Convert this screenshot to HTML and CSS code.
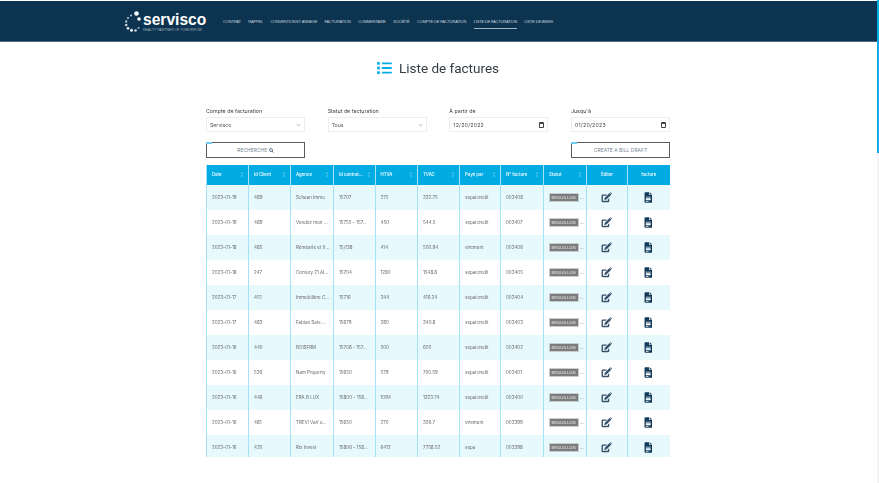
FILE: index.html
```html
<!DOCTYPE html>
<html lang="fr">
<head>
    <meta charset="UTF-8">
    <meta name="viewport" content="width=device-width, initial-scale=1.0">
    <title>Liste de factures</title>
    <link rel="stylesheet" href="styles.css">
</head>
<body>
    <svg class="sprites" width="0" height="0">
        <symbol id="icon-edit" viewBox="0 0 20 20">
            <path d="M15 11.500v4.700a2.300 2.300 0 0 1-2.300 2.300H3.300A2.300 2.300 0 0 1 1 16.200V6.800a2.300 2.300 0 0 1 2.300-2.300h7.700L8.800 6.800H3.500v9.200h9v-2.500z"/>
            <path d="M15.600 1.800l3 3-8.700 8.700-3.900.900.900-3.900zM16.600.900a1 1 0 0 1 1.400 0l1.500 1.500a1 1 0 0 1 0 1.400l-.3.300-2.900-2.900z"/>
        </symbol>
        <symbol id="icon-file" viewBox="0 0 16 20">
            <path d="M2.500 0h7v5.500h6V18.500A1.500 1.500 0 0 1 14 20H2.500A1.500 1.500 0 0 1 1 18.500V1.500A1.500 1.500 0 0 1 2.500 0zM3.500 8.500V10h9V8.500zM3.500 11.500v3.500h9v-3.500zM3.500 16.500V18h5v-1.500z" fill-rule="evenodd"/>
            <path d="M10.800 0l4.700 4.200h-4.700z"/>
        </symbol>
        <symbol id="icon-sort" viewBox="0 0 4 10">
            <path d="M2 0l1.500 3h-3zM2 10L.5 7h3z"/>
        </symbol>
    </svg>

    <div class="window">
        <div class="page">
            <header class="topbar">
                <div class="brand">
                    <svg class="brand-ring" viewBox="0 0 18 22">
                        <circle cx="12.500" cy="2.500" r="2.300" fill="#fff"/>
                        <circle cx="15" cy="8" r="1.800" fill="#fff"/>
                        <circle cx="7" cy="4.500" r="1" fill="#c8d3da"/>
                        <circle cx="4" cy="7" r="1.100" fill="#aab9c4"/>
                        <circle cx="2.200" cy="10.500" r="1.200" fill="#aab9c4"/>
                        <circle cx="2.200" cy="14" r="1.300" fill="#c8d3da"/>
                        <circle cx="4" cy="17.300" r="1.400" fill="#dbe3e8"/>
                        <circle cx="7.500" cy="19.300" r="1.500" fill="#e8edf0"/>
                        <circle cx="11.500" cy="19.500" r="1.300" fill="#c8d3da"/>
                        <circle cx="14.500" cy="17" r="1" fill="#aab9c4"/>
                    </svg>
                    <div class="brand-text">
                        <span class="brand-name">servisco</span>
                        <span class="brand-tag">REALTY PARTNER OF TOMORROW</span>
                    </div>
                </div>
                <nav class="nav">
                    <a>CONTRAT</a>
                    <a>RAPPEL</a>
                    <a>CONVENTION ET ANNEXE</a>
                    <a>FACTURATION</a>
                    <a>COMMENTAIRE</a>
                    <a>SOCIÉTÉ</a>
                    <a>COMPTE DE FACTURATION</a>
                    <a class="active">LISTE DE FACTURATION</a>
                    <a>LISTE DE BIENS</a>
                </nav>
            </header>

            <main class="content">
                <h1 class="title">
                    <svg class="title-icon" viewBox="0 0 16 13">
                        <rect x="0" y="0" width="3" height="3" rx=".6"/>
                        <rect x="0" y="5" width="3" height="3" rx=".6"/>
                        <rect x="0" y="10" width="3" height="3" rx=".6"/>
                        <rect x="5" y=".5" width="11" height="2" rx=".5"/>
                        <rect x="5" y="5.500" width="11" height="2" rx=".5"/>
                        <rect x="5" y="10.500" width="11" height="2" rx=".5"/>
                    </svg>
                    Liste de factures
                </h1>

                <div class="filters">
                    <div class="field">
                        <label>Compte de facturation</label>
                        <div class="input">Servisco <span class="chevron"></span></div>
                    </div>
                    <div class="field">
                        <label>Statut de facturation</label>
                        <div class="input">Tous <span class="chevron"></span></div>
                    </div>
                    <div class="field">
                        <label>À partir de</label>
                        <div class="input date">12/20/2022 <span class="cal"></span></div>
                    </div>
                    <div class="field">
                        <label>Jusqu'à</label>
                        <div class="input date">01/20/2023 <span class="cal"></span></div>
                    </div>
                </div>

                <div class="actions">
                    <button class="btn">RECHERCHE
                        <svg class="btn-icon" viewBox="0 0 10 10"><circle cx="4" cy="4" r="3" fill="none" stroke="currentColor" stroke-width="1.600"/><path d="M6.200 6.200L9.200 9.200" stroke="currentColor" stroke-width="1.800"/></svg>
                    </button>
                    <button class="btn">CREATE A BILL DRAFT</button>
                </div>

                <div class="table-wrap">
                    <table class="bills">
                        <colgroup>
                            <col class="c-date"><col class="c-client"><col class="c-agency"><col class="c-contract">
                            <col class="c-htva"><col class="c-tvac"><col class="c-paid"><col class="c-invoice">
                            <col class="c-status"><col class="c-edit"><col class="c-file">
                        </colgroup>
                        <thead>
                            <tr>
                                <th>Date <svg class="sort"><use href="#icon-sort"/></svg></th>
                                <th>Id Client <svg class="sort"><use href="#icon-sort"/></svg></th>
                                <th>Agence <svg class="sort"><use href="#icon-sort"/></svg></th>
                                <th>Id contrat... <svg class="sort"><use href="#icon-sort"/></svg></th>
                                <th>HTVA <svg class="sort"><use href="#icon-sort"/></svg></th>
                                <th>TVAC <svg class="sort"><use href="#icon-sort"/></svg></th>
                                <th>Payé par <svg class="sort"><use href="#icon-sort"/></svg></th>
                                <th>N° facture <svg class="sort"><use href="#icon-sort"/></svg></th>
                                <th>Statut <svg class="sort"><use href="#icon-sort"/></svg></th>
                                <th class="center">Éditer</th>
                                <th class="center">facture</th>
                            </tr>
                        </thead>
                        <tbody>
                            <tr><td>2023-01-19</td><td>489</td><td>Schaan Immo</td><td>15707</td><td>275</td><td>332.75</td><td>sepaicredit</td><td>003408</td><td class="status"><span class="badge">BROUILLON</span> ...</td><td class="center"><svg class="ico-edit"><use href="#icon-edit"/></svg></td><td class="center"><svg class="ico-file"><use href="#icon-file"/></svg></td></tr>
                            <tr><td>2023-01-19</td><td>489</td><td>Vendez mon ...</td><td>15755 - 157...</td><td>450</td><td>544.5</td><td>sepaicredit</td><td>003407</td><td class="status"><span class="badge">BROUILLON</span> ...</td><td class="center"><svg class="ico-edit"><use href="#icon-edit"/></svg></td><td class="center"><svg class="ico-file"><use href="#icon-file"/></svg></td></tr>
                            <tr><td>2023-01-18</td><td>485</td><td>Réméarle et fi...</td><td>15/138</td><td>414</td><td>500.94</td><td>virement</td><td>003406</td><td class="status"><span class="badge">BROUILLON</span> ...</td><td class="center"><svg class="ico-edit"><use href="#icon-edit"/></svg></td><td class="center"><svg class="ico-file"><use href="#icon-file"/></svg></td></tr>
                            <tr><td>2023-01-18</td><td>247</td><td>Century 21 Al...</td><td>15704</td><td>1280</td><td>1548.8</td><td>sepaicredit</td><td>003405</td><td class="status"><span class="badge">BROUILLON</span> ...</td><td class="center"><svg class="ico-edit"><use href="#icon-edit"/></svg></td><td class="center"><svg class="ico-file"><use href="#icon-file"/></svg></td></tr>
                            <tr><td>2023-01-17</td><td>451</td><td>Immobilière C...</td><td>15716</td><td>344</td><td>416.24</td><td>sepaicredit</td><td>003404</td><td class="status"><span class="badge">BROUILLON</span> ...</td><td class="center"><svg class="ico-edit"><use href="#icon-edit"/></svg></td><td class="center"><svg class="ico-file"><use href="#icon-file"/></svg></td></tr>
                            <tr><td>2023-01-17</td><td>483</td><td>Fabian Sats ...</td><td>15679</td><td>280</td><td>340.8</td><td>sepaicredit</td><td>003403</td><td class="status"><span class="badge">BROUILLON</span> ...</td><td class="center"><svg class="ico-edit"><use href="#icon-edit"/></svg></td><td class="center"><svg class="ico-file"><use href="#icon-file"/></svg></td></tr>
                            <tr><td>2023-01-16</td><td>440</td><td>BOISFRM</td><td>15708 - 157...</td><td>500</td><td>605</td><td>sepaicredit</td><td>003402</td><td class="status"><span class="badge">BROUILLON</span> ...</td><td class="center"><svg class="ico-edit"><use href="#icon-edit"/></svg></td><td class="center"><svg class="ico-file"><use href="#icon-file"/></svg></td></tr>
                            <tr><td>2023-01-16</td><td>536</td><td>Nam Property</td><td>15650</td><td>579</td><td>700.59</td><td>sepaicredit</td><td>003401</td><td class="status"><span class="badge">BROUILLON</span> ...</td><td class="center"><svg class="ico-edit"><use href="#icon-edit"/></svg></td><td class="center"><svg class="ico-file"><use href="#icon-file"/></svg></td></tr>
                            <tr><td>2023-01-16</td><td>446</td><td>ERA B LUX</td><td>15800 - 158...</td><td>1094</td><td>1323.74</td><td>sepaicredit</td><td>003400</td><td class="status"><span class="badge">BROUILLON</span> ...</td><td class="center"><svg class="ico-edit"><use href="#icon-edit"/></svg></td><td class="center"><svg class="ico-file"><use href="#icon-file"/></svg></td></tr>
                            <tr><td>2023-01-16</td><td>481</td><td>TREVI Vari'o...</td><td>15650</td><td>270</td><td>326.7</td><td>virement</td><td>003399</td><td class="status"><span class="badge">BROUILLON</span> ...</td><td class="center"><svg class="ico-edit"><use href="#icon-edit"/></svg></td><td class="center"><svg class="ico-file"><use href="#icon-file"/></svg></td></tr>
                            <tr><td>2023-01-16</td><td>435</td><td>Rix Invest</td><td>15806 - 158...</td><td>6412</td><td>7758.52</td><td>sepa</td><td>003398</td><td class="status"><span class="badge">BROUILLON</span> ...</td><td class="center"><svg class="ico-edit"><use href="#icon-edit"/></svg></td><td class="center"><svg class="ico-file"><use href="#icon-file"/></svg></td></tr>
                        </tbody>
                    </table>
                </div>
            </main>
        </div>
        <div class="scrollbar"><div class="scrollbar-thumb"></div></div>
    </div>
</body>
</html>
```

FILE: styles.css
```css
html, body {
    margin: 0;
    height: 483px;
    overflow: hidden;
    background-color: #fff;
}
body {
    font-family: Inter, "Liberation Sans", sans-serif;
    color: #444;
}
.sprites {
    display: block;
    height: 0;
}
.window {
    display: flex;
    height: 483px;
    filter: blur(0.45px);
}
.page {
    width: 877px;
    padding-top: 1px;
}
.scrollbar {
    width: 2px;
    background-color: #f3f3f3;
}
.scrollbar-thumb {
    height: 153px;
    background-color: #0aaee6;
}

/* top bar */
.topbar {
    display: flex;
    align-items: flex-start;
    height: 41px;
    padding-left: 124px;
    box-sizing: border-box;
    background-color: #0c3350;
    border-bottom: 1px solid #4a6a80;
}
.brand {
    display: flex;
    margin-top: 10px;
}
.brand-ring {
    width: 18px;
    height: 22px;
}
.brand-text {
    display: flex;
    flex-direction: column;
    width: 63px;
    margin-left: 1px;
    color: #fff;
}
.brand-name {
    font-family: "Liberation Sans", Arial, sans-serif;
    font-weight: 700;
    font-size: 15.600px;
    line-height: 17px;
}
.brand-tag {
    font-family: "Liberation Sans", Arial, sans-serif;
    font-size: 3.500px;
    line-height: 4px;
    color: #9fb1bd;
    white-space: nowrap;
}
.nav {
    display: flex;
    gap: 7.400px;
    margin-left: 17px;
    margin-top: 17.500px;
    font-family: "Liberation Sans", Arial, sans-serif;
    font-size: 4px;
    letter-spacing: -0.170px;
    color: #c9d4dc;
}
.nav a {
    padding-bottom: 3px;
    line-height: 6px;
    white-space: nowrap;
}
.nav .active {
    border-bottom: 1.500px solid #9fb4c2;
}

/* title + filters */
.content {
    width: 464px;
    margin-left: 206px;
}
.title {
    display: flex;
    align-items: center;
    justify-content: center;
    gap: 7px;
    height: 20px;
    margin: 16px 0 0;
    font-family: Roboto, sans-serif;
    font-size: 13.500px;
    font-weight: 400;
    color: #333c44;
}
.title-icon {
    width: 15px;
    height: 12px;
    fill: #0aaee6;
}
.filters {
    display: flex;
    justify-content: space-between;
    margin-top: 28px;
}
.field {
    width: 99px;
}
.field label {
    display: block;
    font-size: 5.300px;
    line-height: 8px;
    margin-bottom: 3px;
    color: #3d3d3d;
    padding-top: 1px;
}
.input {
    display: flex;
    align-items: center;
    justify-content: space-between;
    height: 15px;
    margin-top: -1px;
    padding: 0 3px;
    box-sizing: border-box;
    border: 1px solid #eceff1;
    font-size: 5.200px;
    color: #555;
}
.input.date {
    color: #444;
    letter-spacing: 0.25px;
}
.chevron {
    width: 2px;
    height: 2px;
    margin-right: 1px;
    border-right: 1px solid #ccc;
    border-bottom: 1px solid #ccc;
    transform: rotate(45deg);
}
.cal {
    width: 3px;
    height: 3px;
    border: 1px solid #444;
    border-top-width: 2px;
    border-radius: 1px;
}
.actions {
    display: flex;
    justify-content: space-between;
    margin-top: 10px;
}
.btn {
    position: relative;
    width: 99px;
    height: 16px;
    padding: 0;
    box-sizing: border-box;
    background-color: #fff;
    border: 1px solid #5c5c5c;
    border-right-width: 1.500px;
    border-bottom-width: 1.500px;
    font-family: inherit;
    font-size: 4.800px;
    color: #71808c;
    letter-spacing: 0.1px;
}
.btn::before {
    content: "";
    position: absolute;
    left: -1px;
    top: -1px;
    width: 6px;
    height: 1.500px;
    background-color: #6dcdf0;
}
.btn-icon {
    width: 5px;
    height: 5px;
    color: #3f5d75;
    vertical-align: -0.5px;
}

/* table */
.table-wrap {
    height: 292px;
    margin-top: 7px;
    overflow: hidden;
}
.bills {
    width: 464px;
    table-layout: fixed;
    border-collapse: separate;
    border-spacing: 0;
}
.c-date { width: 42px; }
.c-client { width: 42px; }
.c-agency { width: 43px; }
.c-contract { width: 41.500px; }
.c-htva { width: 42.500px; }
.c-tvac { width: 42px; }
.c-paid { width: 41px; }
.c-invoice { width: 43px; }
.c-status { width: 43px; }
.c-edit { width: 41px; }
.c-file { width: 43.500px; }
.bills th, .bills td {
    padding: 0 0 0 5px;
    overflow: hidden;
    white-space: nowrap;
    text-align: left;
    border-left: 1.500px solid #a3e2f7;
}
.bills th:last-child, .bills td:last-child {
    border-right: 1.500px solid #a3e2f7;
}
.bills th {
    position: relative;
    height: 19.500px;
    background-color: #02ace3;
    color: #e6f7fd;
    font-size: 4.300px;
    font-weight: 600;
}
.bills td {
    height: 25.100px;
    box-sizing: border-box;
    font-size: 4.500px;
    color: #666;
}
.bills tbody tr:nth-child(odd) {
    background-color: #e8f9fe;
}
.bills .center {
    padding-left: 0;
    text-align: center;
}
.sort {
    position: absolute;
    right: 5px;
    top: 7px;
    width: 2px;
    height: 5px;
    fill: #bfeafa;
}
.status {
    color: #888;
}
.bills td.status {
    padding-left: 4.500px;
}
.badge {
    display: inline-block;
    padding: 0 2px;
    line-height: 7px;
    border: 0.5px solid #c5cdd0;
    border-radius: 1px;
    background-color: #7c7c7c;
    color: #f2f2f2;
    font-size: 4.100px;
    letter-spacing: 0.1px;
}
.ico-edit {
    display: block;
    width: 11px;
    height: 11px;
    margin: 0 auto;
    transform: translateX(-1px);
    fill: #35506a;
}
.ico-file {
    display: block;
    width: 8.500px;
    height: 11px;
    margin: 0 auto;
    transform: translateX(-1px);
    fill: #143a5a;
}
```
